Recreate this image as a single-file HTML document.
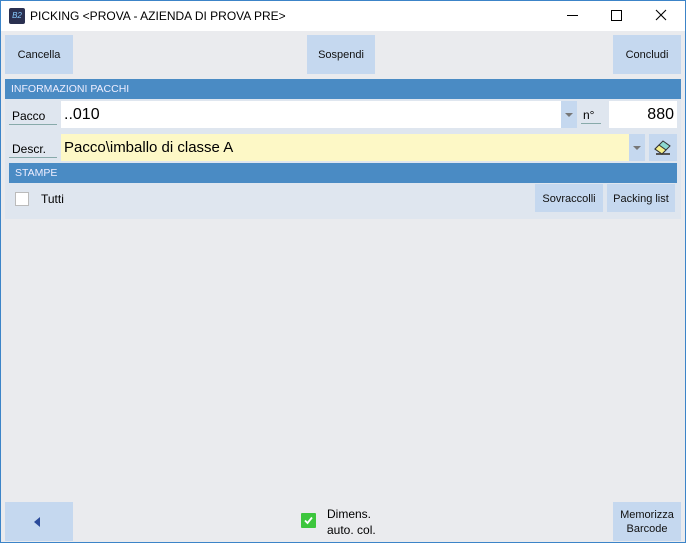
<!DOCTYPE html>
<html><head><style>
*{margin:0;padding:0;box-sizing:border-box}
body{width:686px;height:543px;overflow:hidden;background:#eaebee;font-family:"Liberation Sans",sans-serif;font-size:11px;color:#000;position:relative}
.a{position:absolute}
.win{left:0;top:0;width:686px;height:543px;border:1px solid #3c84c8}
.title{left:1px;top:1px;width:684px;height:30px;background:#fff}
.btn{background:#c5d8ef;display:flex;align-items:center;justify-content:center;text-align:center;font-size:11px;color:#111}
.hdr{background:#4a8bc4;color:#eef;font-size:10.5px;padding-left:6px;line-height:21px}
.lbl{font-size:12px;border-bottom:1px solid #8aa;line-height:15px;padding-left:3px}
</style></head><body>
<div class="a win"></div>
<div class="a title"></div>
<div class="a" style="left:9px;top:8px;width:16px;height:16px;background:#2a3050;border-radius:2px;color:#8cf;font-size:8px;line-height:16px;text-align:center;font-style:italic">B2</div>
<div class="a" style="left:30px;top:9px;font-size:12px">PICKING &lt;PROVA - AZIENDA DI PROVA PRE&gt;</div>
<div class="a" style="left:567px;top:15px;width:11px;height:1px;background:#000"></div>
<div class="a" style="left:611px;top:10px;width:11px;height:11px;border:1px solid #000"></div>
<svg class="a" style="left:655px;top:9px" width="12" height="12"><path d="M1 1L11 11M11 1L1 11" stroke="#000" stroke-width="1.1"/></svg>

<div class="a btn" style="left:5px;top:35px;width:68px;height:39px">Cancella</div>
<div class="a btn" style="left:307px;top:35px;width:68px;height:39px">Sospendi</div>
<div class="a btn" style="left:613px;top:35px;width:68px;height:39px">Concludi</div>

<div class="a hdr" style="left:5px;top:79px;width:676px;height:20px">INFORMAZIONI PACCHI</div>
<div class="a" style="left:5px;top:99px;width:676px;height:120px;background:#dfe6ef"></div>
<div class="a lbl" style="left:9px;top:109px;width:48px">Pacco</div>
<div class="a" style="left:61px;top:101px;width:501px;height:27px;background:#fff;font-size:16px;line-height:27px;padding-left:3px">..010</div>
<div class="a" style="left:561px;top:101px;width:16px;height:27px;background:#c5d8ef"></div>
<div class="a" style="left:565px;top:113px;border:4px solid transparent;border-top:4px solid #777"></div>
<div class="a lbl" style="left:581px;top:108px;width:20px;font-size:12px;padding-left:2px">n°</div>
<div class="a" style="left:609px;top:101px;width:68px;height:27px;background:#fff;font-size:16px;line-height:27px;text-align:right;padding-right:3px">880</div>

<div class="a lbl" style="left:9px;top:142px;width:48px">Descr.</div>
<div class="a" style="left:61px;top:134px;width:568px;height:27px;background:#fdf8c6;font-size:15px;line-height:27px;padding-left:3px">Pacco\imballo di classe A</div>
<div class="a" style="left:629px;top:134px;width:16px;height:27px;background:#c5d8ef"></div>
<div class="a" style="left:633px;top:146px;border:4px solid transparent;border-top:4px solid #777"></div>
<div class="a" style="left:649px;top:134px;width:28px;height:27px;background:#c5d8ef"></div>
<svg class="a" style="left:653px;top:137px" width="20" height="20"><path d="M3 17L17 17" stroke="#555" stroke-width="2"/><path d="M2 12L10 4L17 9L9 17Z" fill="#8cd8d0" stroke="#333"/><path d="M2 12L6 8L13 13L9 17Z" fill="#f6f08a" stroke="#333"/></svg>

<div class="a hdr" style="left:9px;top:163px;width:668px;height:20px">STAMPE</div>
<div class="a" style="left:15px;top:192px;width:14px;height:14px;background:#fff;border:1px solid #bbb"></div>
<div class="a" style="left:41px;top:192px;font-size:12px">Tutti</div>
<div class="a btn" style="left:535px;top:184px;width:68px;height:28px;padding-top:2px">Sovraccolli</div>
<div class="a btn" style="left:607px;top:184px;width:68px;height:28px;padding-top:2px">Packing list</div>

<div class="a btn" style="left:5px;top:502px;width:68px;height:39px"><div style="border:5px solid transparent;border-right:6px solid #2a4a9a;border-left:0;margin-left:-4px"></div></div>
<div class="a" style="left:301px;top:513px;width:15px;height:15px;background:#3dc63d;border-radius:1px"></div>
<svg class="a" style="left:303px;top:515px" width="11" height="11"><path d="M2 5.5L4.5 8L9 2.5" stroke="#fff" stroke-width="1.8" fill="none"/></svg>
<div class="a" style="left:327px;top:506px;font-size:12px;line-height:16px">Dimens.<br>auto. col.</div>
<div class="a btn" style="left:613px;top:502px;width:68px;height:39px;line-height:14px">Memorizza<br>Barcode</div>
</body></html>
